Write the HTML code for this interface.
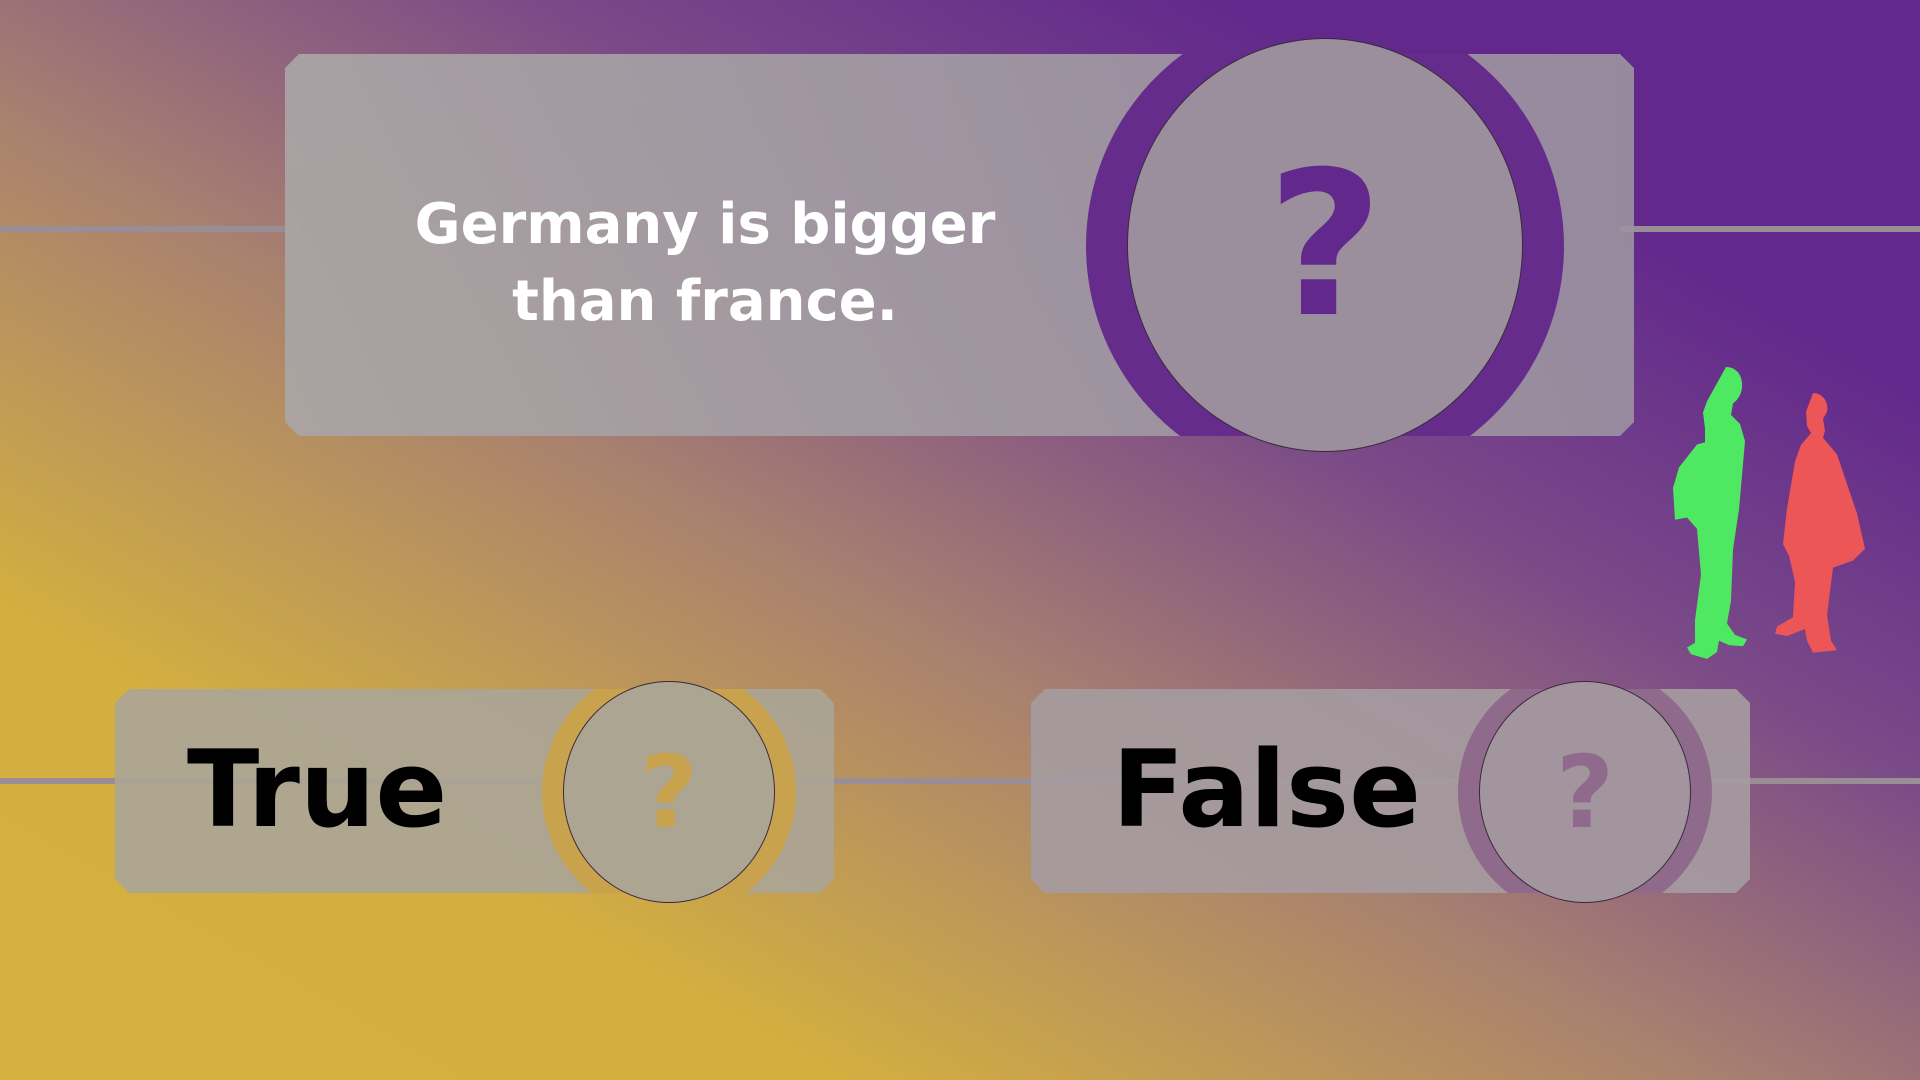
<!DOCTYPE html>
<html><head><meta charset="utf-8"><style>
*{margin:0;padding:0}
body{width:1920px;height:1080px;overflow:hidden;position:relative;font-family:"DejaVu Sans","Liberation Sans",sans-serif;
background:linear-gradient(to top right,#d4b040 0%,#d3af40 22%,#a88070 45%,#7a4a88 64%,#62288c 82%);}
.line{position:absolute;height:6px;background:#9a8e96}
.box{position:absolute;background:rgba(168,162,166,0.9);overflow:hidden;
clip-path:polygon(14px 0,calc(100% - 14px) 0,100% 14px,100% calc(100% - 14px),calc(100% - 14px) 100%,14px 100%,0 calc(100% - 14px),0 14px)}
.ring{position:absolute;border-radius:50%}
.circ{position:absolute;border-radius:50%;border:1.5px solid #3a2a3a;box-sizing:border-box;display:flex;align-items:center;justify-content:center;font-weight:bold}
.t{position:absolute;font-weight:bold}
</style></head><body>
<div class="line" style="left:0;top:226px;width:300px"></div>
<div class="line" style="left:1620px;top:226px;width:300px"></div>
<div class="line" style="left:0;top:778px;width:1920px"></div>

<div class="box" style="left:285px;top:54px;width:1349px;height:382px;background:linear-gradient(90deg,rgba(170,165,165,.92),rgba(155,145,160,.92))">
  <div class="ring" style="left:801px;top:-47px;width:478px;height:478px;background:#652c8c"></div>
</div>
<div class="circ" style="left:1127px;top:38px;width:396px;height:414px;background:#9b8f9e;color:#62288c;font-size:200px">?</div>
<div class="t" style="left:380px;top:186px;width:650px;text-align:center;color:#fff;font-size:56px;line-height:77px">Germany is bigger<br>than france.</div>

<div class="box" style="left:115px;top:689px;width:719px;height:204px;background:rgba(170,165,150,.92)">
  <div class="ring" style="left:427px;top:-24px;width:254px;height:254px;background:#c9a24e"></div>
</div>
<div class="circ" style="left:563px;top:681px;width:212px;height:222px;background:#aca592;color:#c9a24e;font-size:100px">?</div>
<div class="t" style="left:187px;top:728px;color:#000;font-size:106px">True</div>

<div class="box" style="left:1031px;top:689px;width:719px;height:204px;background:rgba(165,155,160,.92)">
  <div class="ring" style="left:427px;top:-24px;width:254px;height:254px;background:#8f6a8c"></div>
</div>
<div class="circ" style="left:1479px;top:681px;width:212px;height:222px;background:#a2959e;color:#8f6a8c;font-size:100px">?</div>
<div class="t" style="left:1112px;top:728px;color:#000;font-size:106px">False</div>

<svg style="position:absolute;left:0;top:0" width="1920" height="1080">
<g transform="translate(0,367) scale(1,1.14) translate(0,-367)">
<path fill="#4ee862" d="M1726 367c10 0 17 7 16 18-1 8-6 12-9 14l-2 10 9 8 5 15-6 60-6 35-2 45-4 20 8 10 12 4-4 6-14-1-10-4-2 10-10 6-16-4-4-6 8-4 0-20 6-40-4-40-10-10-12 2-2-28 6-18 18-20 8-2 0-12-2-14 4-10z"/>
</g>
<g transform="translate(0,393) scale(1,1.18) translate(0,-393)">
<path fill="#ec5656" d="M1813 393c10 0 16 8 14 16l-4 6 2 10-2 6 14 14 20 50 8 30-12 10-20 6-6 40 4 22 6 8-24 2-6-10-2-10-18 6-12-2 2-6 16-8 2-30-6-22-6-10 4-30 8-40 6-14 10-10-4-6-1-12z"/>
</g>
</svg>
</body></html>
